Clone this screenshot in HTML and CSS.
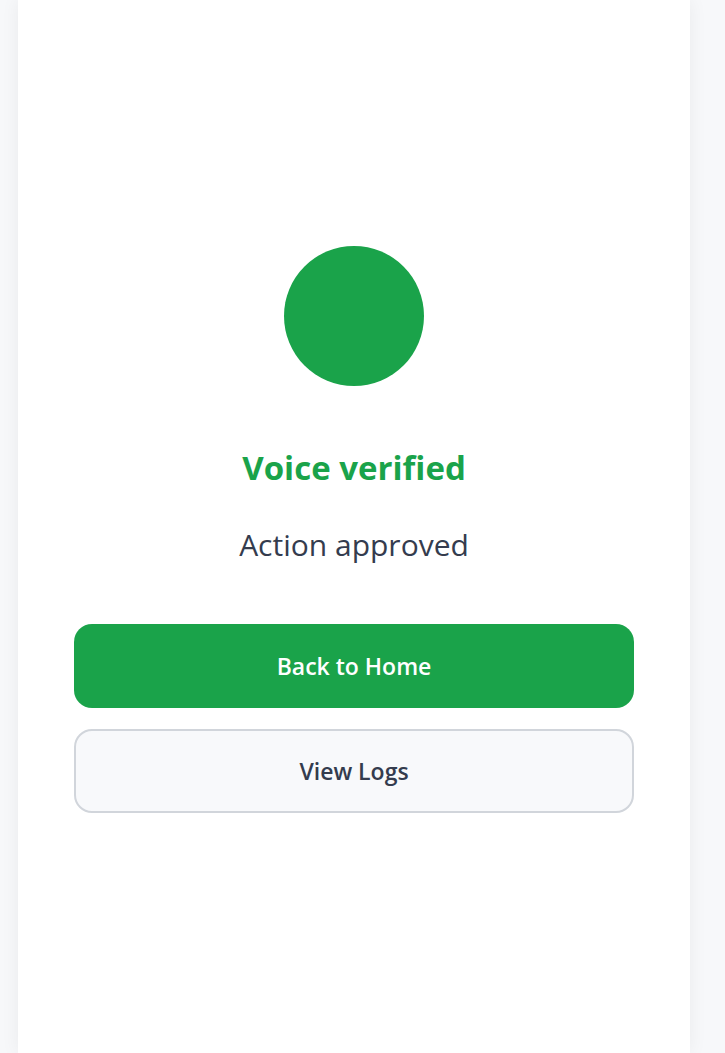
FILE: index.html
```html
<!DOCTYPE html>
<html lang="en">
<head>
<meta charset="utf-8">
<title>Voice verified</title>
<link rel="stylesheet" href="styles.css">
</head>
<body>
<main class="card">
  <div class="status-dot" aria-hidden="true"></div>
  <h1 class="title">Voice verified</h1>
  <p class="subtitle">Action approved</p>
  <div class="actions">
    <button class="btn btn-primary" type="button">Back to Home</button>
    <button class="btn btn-secondary" type="button">View Logs</button>
  </div>
</main>
</body>
</html>
```

FILE: styles.css
```css
* { box-sizing: border-box; }
html, body { height: 100%; }
body {
  margin: 0;
  background: #f7f8fa;
  font-family: "Open Sans", "Noto Sans", sans-serif;
  color: #374151;
}
.card {
  width: 672px;
  margin-left: 18px;
  min-height: 100vh;
  background: #ffffff;
  box-shadow: 0 0 18px rgba(15, 23, 42, 0.06);
  padding: 6px 56px 0;
  display: flex;
  flex-direction: column;
  align-items: center;
  justify-content: center;
}
.status-dot {
  width: 140px;
  height: 140px;
  border-radius: 50%;
  background: #1aa34a;
}
.title {
  margin: 62px 0 0;
  font-size: 33px;
  line-height: 40px;
  font-weight: 700;
  color: #1aa34a;
}
.subtitle {
  margin: 39px 0 0;
  font-size: 30px;
  line-height: 36px;
  color: #343c4e;
}
.actions {
  width: 100%;
  margin-top: 61px;
  display: flex;
  flex-direction: column;
  gap: 21px;
}
.btn {
  width: 100%;
  height: 84px;
  border-radius: 18px;
  font-family: inherit;
  font-size: 23px;
  font-weight: 600;
  cursor: pointer;
}
.btn-primary {
  background: #1aa34a;
  color: #ffffff;
  border: none;
}
.btn-secondary {
  background: #f8f9fb;
  color: #343c4e;
  border: 2.5px solid #d1d5db;
}
```
